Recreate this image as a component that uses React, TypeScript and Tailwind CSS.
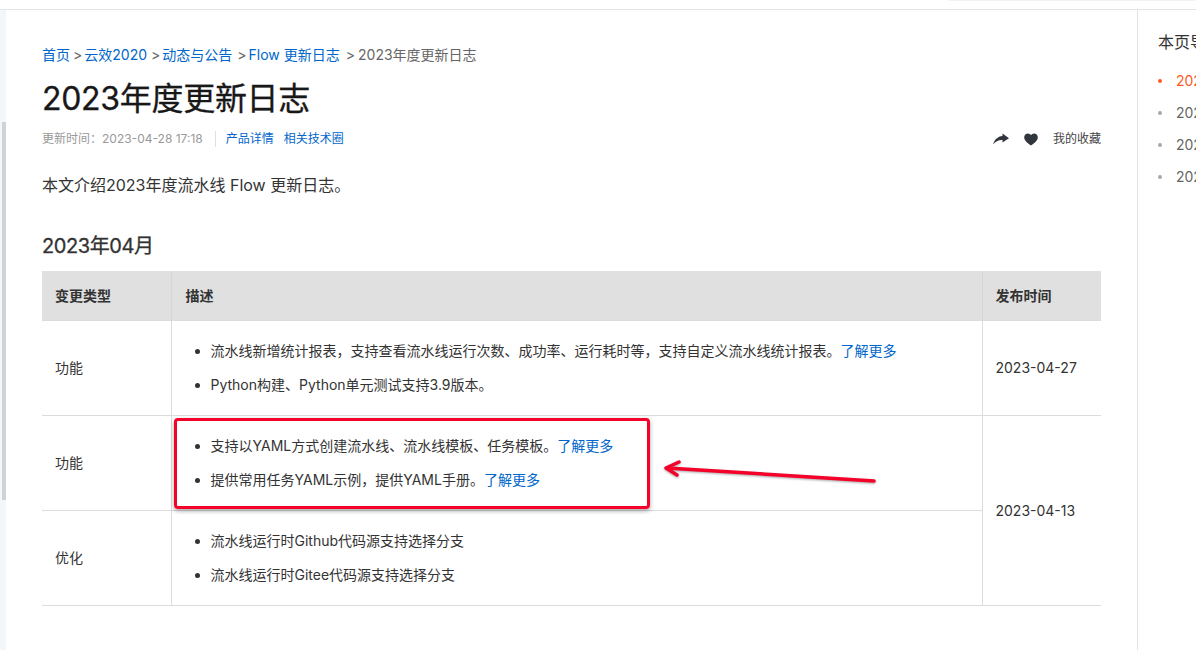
import React from 'react';

const FONT = "font-['Inter','Noto_Sans_CJK_SC',sans-serif]";

const More = () => <a className="text-[#0066cc]">了解更多</a>;

const Bullets: React.FC<{ items: React.ReactNode[] }> = ({ items }) => (
  <ul className="flex flex-col gap-[12px] pl-[25px] list-disc">
    {items.map((item, i) => (
      <li key={i} className="h-[22px] leading-[22px]">{item}</li>
    ))}
  </ul>
);

const Sep = () => <span className="text-[#666]">&gt;</span>;

export default function App() {
  return (
    <div className={`${FONT} relative w-[1196px] h-[650px] overflow-hidden bg-white text-[#181818]`}>
      {/* top strip */}
      <div className="h-[10px] border-b border-[#e4e4e4] flex justify-end">
        <div className="w-[248px] h-[1px] bg-[#f3f3f6]"></div>
      </div>

      <div className="flex h-[640px]">
        {/* left gutter */}
        <div className="w-[6px] bg-[#f3f6fa] flex flex-col pl-[2px] pt-[112px]">
          <div className="w-[4px] h-[378px] bg-[#d0d2d5]"></div>
        </div>

        {/* main */}
        <div className="w-[1132px] pl-[36px] pr-[36px] pt-[34px] border-r border-[#e4e4e4]">
          <div className="h-[22px] flex items-center text-[14px] leading-[22px] text-[#0066cc] whitespace-nowrap">
            <a>首页</a>
            <span className="ml-[3px] mr-[2px]"><Sep /></span>
            <a>云效2020</a>
            <span className="ml-[4px] mr-[2px]"><Sep /></span>
            <a>动态与公告</a>
            <span className="ml-[5px] mr-[2px]"><Sep /></span>
            <a>Flow 更新日志</a>
            <span className="ml-[6px] mr-[3px]"><Sep /></span>
            <span className="text-[#666]">2023年度更新日志</span>
          </div>

          <h1 className="mt-[11px] h-[44px] text-[32px] leading-[44px] tracking-[-0.3px] font-normal text-[#181818] [-webkit-text-stroke:0.3px_#181818]">2023年度更新日志</h1>

          <div className="mt-[8px] h-[20px] flex items-center text-[12px] whitespace-nowrap">
            <span className="text-[#999]">更新时间：2023-04-28 17:18</span>
            <span className="ml-[12px] mr-[10px] w-[1px] h-[16px] bg-[#e0e0e0]"></span>
            <a className="text-[#0066cc]">产品详情</a>
            <a className="ml-[10px] text-[#0066cc]">相关技术圈</a>
            <div className="ml-auto flex items-center text-[#444]">
              <svg viewBox="0 0 16 12" className="w-[16px] h-[12px] fill-[#30363b]">
                <path d="M9.5 0.5 L16 5.2 L9.5 9.5 V7 C5.5 6.8 2.6 8.4 0.2 11.6 C1.2 6.8 4.6 3.4 9.5 3 Z" />
              </svg>
              <svg viewBox="0 0 14 13" className="ml-[15px] w-[14px] h-[13px] fill-[#30363b]">
                <path d="M7 12.6 C3 9.6 0.2 7.4 0.2 4.2 C0.2 1.9 2 0.4 3.8 0.4 C5.2 0.4 6.3 1.1 7 2.2 C7.7 1.1 8.8 0.4 10.2 0.4 C12 0.4 13.8 1.9 13.8 4.2 C13.8 7.4 11 9.6 7 12.6 Z" />
              </svg>
              <span className="ml-[15px]">我的收藏</span>
            </div>
          </div>

          <p className="mt-[22px] h-[28px] text-[16px] leading-[28px] text-[#333]">本文介绍2023年度流水线 Flow 更新日志。</p>

          <h2 className="mt-[33px] h-[28px] text-[20px] leading-[28px] tracking-[-0.4px] font-normal text-[#333] [-webkit-text-stroke:0.3px_#333]">2023年04月</h2>

          <table className="mt-[11px] w-[1059px] table-fixed border-collapse text-[14px] text-[#333]">
            <colgroup>
              <col className="w-[129px]" />
              <col className="w-[811px]" />
              <col className="w-[119px]" />
            </colgroup>
            <thead>
              <tr className="h-[49px] bg-[#e0e0e0] border-b border-[#dcdcdc]">
                <th className="px-[13px] text-left font-bold text-[14px] text-[#333]">变更类型</th>
                <th className="px-[13px] pl-[14px] text-left font-bold text-[14px] text-[#333] border-l border-[#d6d6d6]">描述</th>
                <th className="px-[13px] text-left font-bold text-[14px] text-[#333] border-l border-[#d6d6d6]">发布时间</th>
              </tr>
            </thead>
            <tbody>
              <tr className="h-[95px] border-b border-[#dcdcdc]">
                <td className="px-[13px]">功能</td>
                <td className="px-[13px] pl-[14px] border-l border-[#dcdcdc]">
                  <Bullets items={[
                    <>流水线新增统计报表，支持查看流水线运行次数、成功率、运行耗时等，支持自定义流水线统计报表。<More /></>,
                    'Python构建、Python单元测试支持3.9版本。',
                  ]} />
                </td>
                <td className="px-[13px] border-l border-[#dcdcdc]">2023-04-27</td>
              </tr>
              <tr className="h-[95px] border-b border-[#dcdcdc]">
                <td className="px-[13px]">功能</td>
                <td className="px-[13px] pl-[14px] border-l border-[#dcdcdc]">
                  <Bullets items={[
                    <>支持以YAML方式创建流水线、流水线模板、任务模板。<More /></>,
                    <>提供常用任务YAML示例，提供YAML手册。<More /></>,
                  ]} />
                </td>
                <td rowSpan={2} className="px-[13px] border-l border-[#dcdcdc]">2023-04-13</td>
              </tr>
              <tr className="h-[95px] border-b border-[#dcdcdc]">
                <td className="px-[13px]">优化</td>
                <td className="px-[13px] pl-[14px] border-l border-[#dcdcdc]">
                  <Bullets items={[
                    '流水线运行时Github代码源支持选择分支',
                    '流水线运行时Gitee代码源支持选择分支',
                  ]} />
                </td>
              </tr>
            </tbody>
          </table>
        </div>

        {/* page nav, cut off by the window edge */}
        <div className="flex-1 min-w-0 overflow-hidden pl-[20px] pt-[21px] whitespace-nowrap">
          <div className="h-[22px] text-[16px] leading-[22px] text-[#333]">本页导读</div>
          <ul className="mt-[17px] flex flex-col text-[14px]">
            {['text-[#ff5a26]', 'text-[#666]', 'text-[#666]', 'text-[#666]'].map((color, i) => (
              <li key={i} className={`h-[32px] leading-[22px] flex items-start ${color}`}>
                <span className={`mt-[9px] shrink-0 w-[4px] h-[4px] rounded-full ${i === 0 ? 'bg-[#ff5a26]' : 'bg-[#a8a8a8]'}`}></span>
                <span className="ml-[14px]">2023年04月</span>
              </li>
            ))}
          </ul>
        </div>
      </div>

      {/* red annotation box */}
      <div className="absolute left-[174px] top-[418px] w-[476px] h-[91px] rounded-[4px] border-[3px] border-[#f5022b] shadow-[0_2px_4px_rgba(0,0,0,0.35)]"></div>

      {/* red annotation arrow */}
      <svg className="absolute left-[655px] top-[450px] w-[230px] h-[44px]" viewBox="0 0 230 44" fill="none">
        <g stroke="#f5022b" strokeWidth="3.5" strokeLinecap="round" strokeLinejoin="round" style={{ filter: 'drop-shadow(0 1px 1px rgba(0,0,0,0.35))' }}>
          <path d="M12 18 L219 31" />
          <path d="M24 12 L11 18 L22 25" />
        </g>
      </svg>
    </div>
  );
}
